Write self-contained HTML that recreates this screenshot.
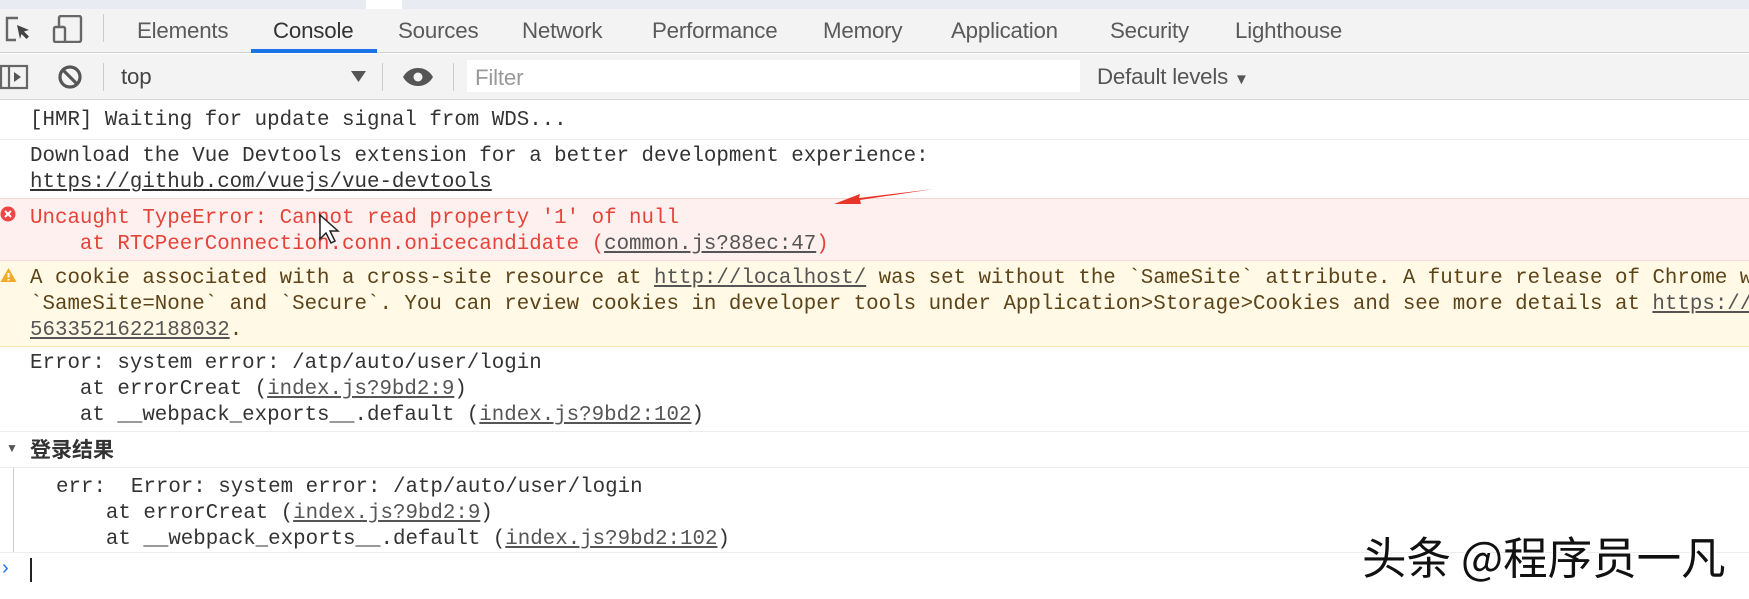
<!DOCTYPE html>
<html><head><meta charset="utf-8"><style>
*{margin:0;padding:0;box-sizing:border-box}
body{width:1749px;height:599px;overflow:hidden;background:#fff;position:relative;font-family:"Liberation Sans","Noto Sans CJK SC",sans-serif}
.abs{position:absolute}
.tab{position:absolute;top:18px;font-size:22.3px;color:#5a5a5a;white-space:nowrap;letter-spacing:-0.2px}
.mono{font-family:"Liberation Mono","Noto Sans CJK SC",monospace;font-size:20.8px;white-space:pre;position:absolute;line-height:26px}
.u{text-decoration:underline}
</style></head><body>
<div class="abs" style="left:0;top:0;width:1749px;height:9px;background:#e8ebf2"></div>
<div class="abs" style="left:366px;top:0;width:36px;height:9px;background:#fff"></div>
<div class="abs" style="left:0;top:9px;width:1749px;height:44px;background:#f3f3f3;border-bottom:1px solid #d0d0d0"></div>
<svg class="abs" style="left:4px;top:15px" width="80" height="28" viewBox="0 0 80 28">
<path d="M14 3H3v22h9" fill="none" stroke="#666" stroke-width="2.4"/>
<path d="M13 10l12 5-5 1.5 5 5-2.5 2.5-5-5-1.5 5z" fill="#444"/>
<rect x="55" y="1" width="22" height="26" rx="2" fill="none" stroke="#666" stroke-width="2.4"/>
<rect x="50" y="12" width="11" height="15" rx="1.5" fill="#f3f3f3" stroke="#666" stroke-width="2.4"/>
</svg>
<div class="abs" style="left:103px;top:14px;width:1px;height:28px;background:#ccc"></div>
<div class="tab" style="left:137px">Elements</div>
<div class="tab" style="left:273px;color:#333">Console</div>
<div class="tab" style="left:398px">Sources</div>
<div class="tab" style="left:522px">Network</div>
<div class="tab" style="left:652px">Performance</div>
<div class="tab" style="left:823px">Memory</div>
<div class="tab" style="left:951px">Application</div>
<div class="tab" style="left:1110px">Security</div>
<div class="tab" style="left:1235px">Lighthouse</div>
<div class="abs" style="left:251px;top:49px;width:126px;height:4px;background:#1a73e8"></div>
<div class="abs" style="left:0;top:54px;width:1749px;height:46px;background:#f3f3f3;border-bottom:1px solid #d6d6d6"></div>
<svg class="abs" style="left:0;top:64px" width="440" height="28" viewBox="0 0 440 28">
<rect x="1" y="2" width="26" height="22" fill="none" stroke="#666" stroke-width="2.2"/>
<line x1="9" y1="2" x2="9" y2="24" stroke="#666" stroke-width="2.2"/>
<path d="M14 8l7 5-7 5z" fill="#555"/>
<circle cx="70" cy="13" r="10" fill="none" stroke="#555" stroke-width="3.2"/>
<line x1="63" y1="6" x2="77" y2="20" stroke="#555" stroke-width="3.2"/>
<path d="M351 7h15l-7.5 11z" fill="#555"/>
<path d="M403 13c4-7 10-9 15-9s11 2 15 9c-4 7-10 9-15 9s-11-2-15-9z" fill="#555"/>
<circle cx="418" cy="13" r="4.5" fill="#f3f3f3"/>
</svg>
<div class="abs" style="left:103px;top:63px;width:1px;height:28px;background:#ccc"></div>
<div class="abs" style="left:382px;top:63px;width:1px;height:28px;background:#ccc"></div>
<div class="abs" style="left:453px;top:63px;width:1px;height:28px;background:#ccc"></div>
<div class="tab" style="left:121px;top:64px;color:#444">top</div>
<div class="abs" style="left:467px;top:60px;width:613px;height:32px;background:#fff"></div>
<div class="tab" style="left:475px;top:65px;color:#999">Filter</div>
<div class="tab" style="left:1097px;top:64px;color:#555">Default levels <span style="font-size:15px">▼</span></div>

<!-- console -->
<div class="mono" style="left:30px;top:108px;color:#333">[HMR] Waiting for update signal from WDS...</div>
<div class="abs" style="left:0;top:139px;width:1749px;height:1px;background:#ececec"></div>
<div class="mono" style="left:30px;top:144px;color:#333">Download the Vue Devtools extension for a better development experience:
<span class="u">https://github.com/vuejs/vue-devtools</span></div>
<div class="abs" style="left:0;top:198px;width:1749px;height:63px;background:#fff0f0;border-top:1px solid #fbd6d6;border-bottom:1px solid #fbd6d6"></div>
<svg class="abs" style="left:0;top:206px" width="16" height="16"><circle cx="8" cy="8" r="7.5" fill="#e44"/><path d="M5 5l6 6M11 5l-6 6" stroke="#fff" stroke-width="2"/></svg>
<div class="mono" style="left:30px;top:206px;color:#e5443a">Uncaught TypeError: Cannot read property '1' of null
    at RTCPeerConnection.conn.onicecandidate (<span class="u" style="color:#555">common.js?88ec:47</span>)</div>
<div class="abs" style="left:0;top:261px;width:1749px;height:86px;background:#fff9e6;border-bottom:1px solid #f5e6b8"></div>
<svg class="abs" style="left:0;top:267px" width="17" height="16"><path d="M8.5 1L16.5 15H0.5z" fill="#f2ab26"/><path d="M8.5 6v4.5M8.5 12v1.5" stroke="#fff" stroke-width="2"/></svg>
<div class="mono" style="left:30px;top:266px;color:#5c4318">A cookie associated with a cross-site resource at <span class="u" style="color:#555">http://localhost/</span> was set without the `SameSite` attribute. A future release of Chrome will
`SameSite=None` and `Secure`. You can review cookies in developer tools under Application&gt;Storage&gt;Cookies and see more details at <span class="u" style="color:#555">https://www</span>
<span class="u" style="color:#555">5633521622188032</span>.</div>
<div class="mono" style="left:30px;top:351px;color:#333">Error: system error: /atp/auto/user/login
    at errorCreat (<span class="u" style="color:#555">index.js?9bd2:9</span>)
    at __webpack_exports__.default (<span class="u" style="color:#555">index.js?9bd2:102</span>)</div>
<div class="abs" style="left:0;top:431px;width:1749px;height:1px;background:#ececec"></div>
<div class="abs" style="left:6px;top:441px;font-size:12px;color:#555">▼</div>
<div class="abs" style="left:30px;top:434px;font-size:21px;font-weight:bold;color:#333;font-family:'Noto Sans CJK SC',sans-serif">登录结果</div>
<div class="abs" style="left:0;top:467px;width:1749px;height:1px;background:#ececec"></div>
<div class="abs" style="left:13px;top:468px;width:1px;height:84px;background:#ccc"></div>
<div class="mono" style="left:56px;top:475px;color:#333">err:  Error: system error: /atp/auto/user/login
    at errorCreat (<span class="u" style="color:#555">index.js?9bd2:9</span>)
    at __webpack_exports__.default (<span class="u" style="color:#555">index.js?9bd2:102</span>)</div>
<div class="abs" style="left:0;top:552px;width:1749px;height:1px;background:#ececec"></div>
<div class="abs" style="left:2px;top:557px;font-size:20px;color:#1a73e8">›</div>
<div class="abs" style="left:30px;top:558px;width:2px;height:24px;background:#222"></div>

<svg class="abs" style="left:830px;top:185px" width="110" height="25"><path d="M4 19L30 9 29 13 104 4 30 15 31 19z" fill="#e8352a"/></svg>
<svg class="abs" style="left:318px;top:213px" width="22" height="32"><path d="M2 2v24l6-6 5 10 4-2-5-10h8z" fill="#fff" stroke="#222" stroke-width="1.5"/></svg>
<div class="abs" style="left:1362px;top:522px;font-size:44.5px;color:#111;font-family:'Noto Sans CJK SC',sans-serif;text-shadow:2px 2px 0 #fff,-1px -1px 0 #fff;white-space:nowrap">头条 @程序员一凡</div>
</body></html>
